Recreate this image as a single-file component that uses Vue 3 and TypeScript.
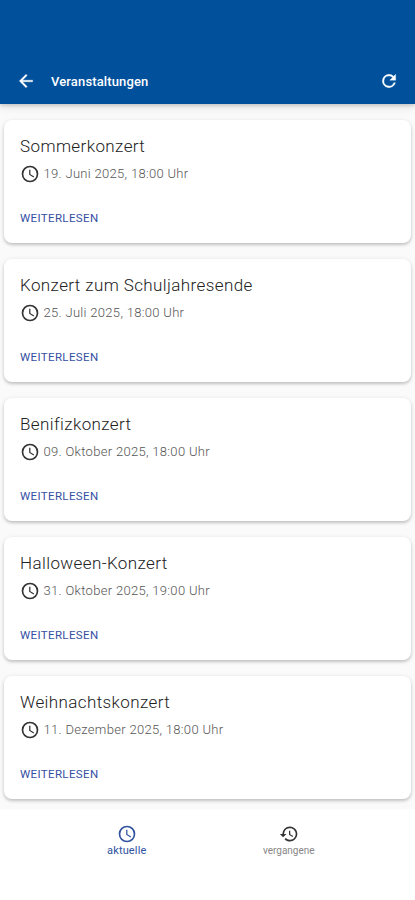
<script setup lang="ts">
interface ConcertEvent {
  title: string
  date: string
}

const events: ConcertEvent[] = [
  { title: 'Sommerkonzert', date: '19. Juni 2025, 18:00 Uhr' },
  { title: 'Konzert zum Schuljahresende', date: '25. Juli 2025, 18:00 Uhr' },
  { title: 'Benifizkonzert', date: '09. Oktober 2025, 18:00 Uhr' },
  { title: 'Halloween-Konzert', date: '31. Oktober 2025, 19:00 Uhr' },
  { title: 'Weihnachtskonzert', date: '11. Dezember 2025, 18:00 Uhr' },
]
</script>

<template>
  <div class="screen">
    <header class="app-bar">
      <button class="icon-button" aria-label="Zurück">
        <svg viewBox="0 0 24 24"><path d="M20 11H7.83l5.59-5.59L12 4l-8 8 8 8 1.41-1.41L7.83 13H20z" /></svg>
      </button>
      <h1>Veranstaltungen</h1>
      <button class="icon-button" aria-label="Aktualisieren">
        <svg viewBox="0 0 24 24"><path d="M17.65 6.35A7.96 7.96 0 0 0 12 4a8 8 0 1 0 7.73 10h-2.08A6 6 0 1 1 12 6c1.66 0 3.14.69 4.22 1.78L13 11h7V4z" /></svg>
      </button>
    </header>

    <main class="list">
      <article v-for="event in events" :key="event.title" class="card">
        <h2>{{ event.title }}</h2>
        <p class="date">
          <svg viewBox="0 0 24 24"><path d="M12 2a10 10 0 1 0 0 20 10 10 0 0 0 0-20zm0 18a8 8 0 1 1 0-16 8 8 0 0 1 0 16zm.5-13H11v6l5.25 3.15.75-1.23-4.5-2.67z" /></svg>
          <span>{{ event.date }}</span>
        </p>
        <button class="more">WEITERLESEN</button>
      </article>
    </main>

    <nav class="tabs">
      <button class="tab active">
        <svg viewBox="0 0 24 24"><path d="M12 2a10 10 0 1 0 0 20 10 10 0 0 0 0-20zm0 18a8 8 0 1 1 0-16 8 8 0 0 1 0 16zm.5-13H11v6l5.25 3.15.75-1.23-4.5-2.67z" /></svg>
        <span>aktuelle</span>
      </button>
      <button class="tab">
        <svg viewBox="0 0 24 24"><path d="M13 3a9 9 0 0 0-9 9H1l3.89 3.89.07.14L9 12H6a7 7 0 1 1 2.06 4.94l-1.42 1.42A9 9 0 1 0 13 3zm-1 5v5l4.28 2.54.72-1.21-3.5-2.08V8z" /></svg>
        <span>vergangene</span>
      </button>
    </nav>
  </div>
</template>

<style>
body {
  background: #fff;
}
</style>

<style scoped>
.screen {
  display: flex;
  flex-direction: column;
  height: 900px;
  overflow: hidden;
  background: #fafafa;
  font-family: Roboto, "Liberation Sans", sans-serif;
}

button {
  padding: 0;
  border: 0;
  background: none;
  font-family: inherit;
}

svg {
  display: block;
  fill: currentColor;
}

.app-bar {
  display: flex;
  align-items: center;
  box-sizing: border-box;
  flex: none;
  height: 103.5px;
  padding: 59px 16px 0;
  background: #00509b;
  box-shadow: 0 2px 3px rgba(0, 0, 0, 0.14), 0 4px 9px rgba(0, 0, 0, 0.08);
  color: #fff;
}

.app-bar h1 {
  flex: 1;
  margin: 1px 0 0 15px;
  font-size: 13px;
  font-weight: 500;
  letter-spacing: 0.14px;
  line-height: 20px;
}

.icon-button {
  color: #fff;
}

.icon-button svg {
  width: 20px;
  height: 20px;
  stroke: currentColor;
  stroke-width: 0.4;
}

.list {
  display: flex;
  flex: none;
  flex-direction: column;
  gap: 16px;
  box-sizing: border-box;
  height: 705px;
  padding: 16.2px 4px 0;
}

.card {
  display: flex;
  flex: none;
  flex-direction: column;
  align-items: flex-start;
  box-sizing: border-box;
  height: 123px;
  padding: 14px 16px 0;
  border-radius: 8px;
  background: #fff;
  box-shadow: 0 2px 3px rgba(0, 0, 0, 0.16), 0 1px 5px rgba(0, 0, 0, 0.1);
}

.card h2 {
  margin: 0;
  color: #212121;
  font-size: 17px;
  font-weight: 300;
  letter-spacing: 0.4px;
  line-height: 25px;
}

.date {
  display: flex;
  align-items: center;
  gap: 4px;
  height: 20px;
  margin: 5px 0 0 -0.5px;
  color: #555;
  font-size: 13px;
  font-weight: 300;
  letter-spacing: 0.31px;
}

.date svg {
  width: 20px;
  height: 20px;
  color: #333;
}

.more {
  margin-top: 26px;
  color: #3450a3;
  font-size: 11.5px;
  font-weight: 400;
  letter-spacing: 0.36px;
  line-height: 16px;
}

.tabs {
  display: flex;
  flex: 1;
  justify-content: center;
  background: #fff;
}

.tab {
  display: flex;
  flex-direction: column;
  align-items: center;
  width: 162.5px;
  padding-top: 15.5px;
  color: #333;
  font-size: 10px;
}

.tab svg {
  width: 20px;
  height: 20px;
}

.tab span {
  color: #888;
  line-height: 14px;
}

.tab.active {
  padding-left: 1px;
}

.tab.active,
.tab.active span {
  color: #2f539f;
  font-size: 11px;
  letter-spacing: 0.15px;
}
</style>
